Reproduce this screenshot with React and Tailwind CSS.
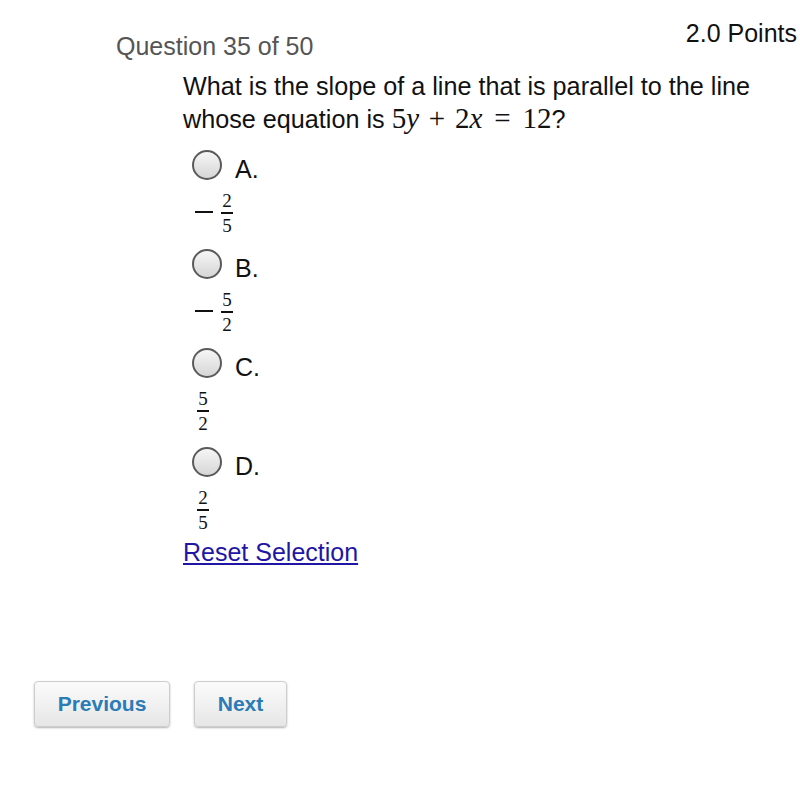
import React from "react";

function Frac({ num, den }) {
  return (
    <span className="inline-flex flex-col items-center font-['Liberation_Serif',serif] text-[19px] text-[#111]">
      <span className="block leading-[16px]">{num}</span>
      <span className="block mt-[3px] h-[1.5px] w-[12px] bg-[#111]"></span>
      <span className="block mt-[4px] leading-[16px]">{den}</span>
    </span>
  );
}

function Option({ label, neg, num, den, first }) {
  return (
    <div className={first ? "" : "mt-[17px]"}>
      <div className="flex items-start h-[30px]">
        <span className="ml-[9px] block w-[30px] h-[30px] rounded-full border-[2px] border-[#5a5a5a] bg-gradient-to-b from-[#f6f6f6] to-[#d6d6d6]"></span>
        <span className="ml-[13px] mt-[4px] text-[25px] leading-[30px] text-[#111]">{label}</span>
      </div>
      <div className="mt-[12px] h-[40px] flex items-center">
        {neg ? (
          <>
            <span className="ml-[12px] block w-[18px] h-[1.5px] bg-[#111]"></span>
            <span className="ml-[8px]">
              <Frac num={num} den={den} />
            </span>
          </>
        ) : (
          <span className="ml-[14px]">
            <Frac num={num} den={den} />
          </span>
        )}
      </div>
    </div>
  );
}

export default function App() {
  return (
    <div className="w-[800px] h-[801px] bg-white font-['Liberation_Sans',Arial,sans-serif] overflow-hidden">
      <div className="flex items-start justify-between pt-[19px] pl-[116px] pr-[3px]">
        <div className="mt-[13px] text-[25px] leading-[29px] text-[#555]">Question 35 of 50</div>
        <div className="text-[25px] leading-[29px] text-[#111]">2.0 Points</div>
      </div>
      <div className="mt-[9px] ml-[183px] text-[25.2px] leading-[32px] text-[#111]">
        <div>What is the slope of a line that is parallel to the line</div>
        <div className="whitespace-nowrap">
          whose equation is{" "}
          <span className="font-['Liberation_Serif',serif] text-[29px] leading-[32px]">
            5<i>y</i>
            <span className="inline-block mx-[7px] w-[22px] text-center">+</span>
            2<i>x</i>
            <span className="inline-block mx-[9px] w-[22px] text-center">=</span>
            12
          </span>
          ?
        </div>
      </div>
      <div className="mt-[15px] ml-[183px]">
        <Option first label="A." neg num="2" den="5" />
        <Option label="B." neg num="5" den="2" />
        <Option label="C." num="5" den="2" />
        <Option label="D." num="2" den="5" />
        <div className="mt-[9px]">
          <a href="#" className="text-[25px] leading-[29px] text-[#1f16a6] underline">Reset Selection</a>
        </div>
      </div>
      <div className="mt-[113px] ml-[34px] flex gap-[24px]">
        <button className="w-[136px] h-[46px] rounded-[4px] border border-[#cdcdcd] bg-gradient-to-b from-[#fbfbfb] to-[#e6e6e6] shadow-[0_1px_2px_rgba(0,0,0,0.3)] text-[21px] font-bold text-[#2a7bb6]">
          Previous
        </button>
        <button className="w-[93px] h-[46px] rounded-[4px] border border-[#cdcdcd] bg-gradient-to-b from-[#fbfbfb] to-[#e6e6e6] shadow-[0_1px_2px_rgba(0,0,0,0.3)] text-[21px] font-bold text-[#2a7bb6]">
          Next
        </button>
      </div>
    </div>
  );
}
